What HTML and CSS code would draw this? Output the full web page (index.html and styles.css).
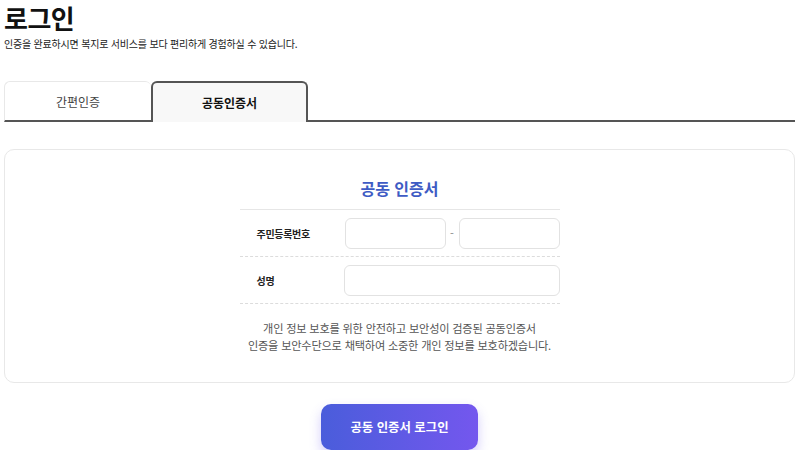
FILE: index.html
```html
<!DOCTYPE html>
<html lang="ko">
<head>
<meta charset="utf-8">
<link rel="stylesheet" href="styles.css">
</head>
<body>
<div class="page">
  <h1 class="title">로그인</h1>
  <p class="subtitle">인증을 완료하시면 복지로 서비스를 보다 편리하게 경험하실 수 있습니다.</p>
  <div class="tabs">
    <div class="tab">간편인증</div>
    <div class="tab active">공동인증서</div>
    <div class="tab-rest"></div>
  </div>
  <div class="card">
    <div class="form">
      <h2 class="form-title">공동 인증서</h2>
      <div class="row">
        <div class="label">주민등록번호</div>
        <div class="fields">
          <input class="input short" type="text">
          <span class="dash">-</span>
          <input class="input short" type="text">
        </div>
      </div>
      <div class="row">
        <div class="label">성명</div>
        <div class="fields">
          <input class="input wide" type="text">
        </div>
      </div>
      <p class="desc">개인 정보 보호를 위한 안전하고 보안성이 검증된 공동인증서<br>인증을 보안수단으로 채택하여 소중한 개인 정보를 보호하겠습니다.</p>
    </div>
  </div>
  <div class="actions">
    <button class="btn">공동 인증서 로그인</button>
  </div>
</div>
</body>
</html>
```

FILE: styles.css
```css
* { box-sizing: border-box; }
html, body { margin: 0; padding: 0; background: #fff; }
body {
  font-family: "Noto Sans CJK KR", "Noto Sans", sans-serif;
  color: #111;
}
.page { padding: 0 5px 0 4px; }
.title {
  margin: 0;
  padding-top: 3px;
  font-size: 26px;
  line-height: 30px;
  font-weight: 700;
  letter-spacing: -0.5px;
}
.subtitle {
  margin: 3px 0 0;
  font-size: 10px;
  line-height: 16px;
  color: #222;
  letter-spacing: -0.2px;
}
.tabs {
  display: flex;
  margin-top: 29px;
  height: 41px;
}
.tab {
  width: 147px;
  display: flex;
  align-items: center;
  justify-content: center;
  font-size: 12px;
  color: #444;
  border: 1px solid #e8e8e8;
  border-bottom: 2px solid #555;
  border-radius: 6px 6px 0 0;
  border-right: none;
}
.tab.active {
  width: 157px;
  font-weight: 700;
  color: #111;
  background: #f8f8f8;
  border: 2px solid #555;
  border-bottom: none;
  border-radius: 6px 6px 0 0;
}
.tab-rest {
  flex: 1;
  border-bottom: 2px solid #555;
}
.card {
  margin-top: 27px;
  border: 1px solid #e8e8e8;
  border-radius: 10px;
  height: 234px;
  display: flex;
  justify-content: center;
}
.form { width: 320px; padding-top: 25px; }
.form-title {
  margin: 0;
  text-align: center;
  font-size: 16px;
  line-height: 26px;
  color: #3e5bc4;
  font-weight: 700;
  padding-bottom: 8px;
  border-bottom: 1px solid #e6e6e6;
}
.row {
  display: flex;
  align-items: center;
  height: 47px;
  border-bottom: 1px dashed #dcdcdc;
}
.label {
  width: 104px;
  padding-left: 17px;
  font-size: 10px;
  font-weight: 700;
  color: #222;
  letter-spacing: -0.3px;
}
.fields { flex: 1; display: flex; align-items: center; }
.input {
  height: 31px;
  border: 1px solid #e2e2e2;
  border-radius: 6px;
  background: #fff;
  outline: none;
}
.short { width: 101px; margin-left: 2px; }
.short:last-child { margin-left: 0; }
.wide { width: 216px; }
.dash {
  width: 13px;
  text-align: center;
  font-size: 11px;
  color: #888;
}
.desc {
  margin: 16px 0 0;
  text-align: center;
  font-size: 11.2px;
  line-height: 17px;
  color: #555;
  letter-spacing: -0.2px;
}
.actions {
  display: flex;
  justify-content: center;
  padding-top: 21px;
}
.btn {
  width: 157px;
  height: 46px;
  border: none;
  border-radius: 10px;
  background: linear-gradient(90deg, #4a5ddb, #7457ee);
  color: #fff;
  font-family: inherit;
  font-size: 12.4px;
  font-weight: 700;
  box-shadow: 0 6px 12px rgba(110, 90, 240, 0.3);
}
```
